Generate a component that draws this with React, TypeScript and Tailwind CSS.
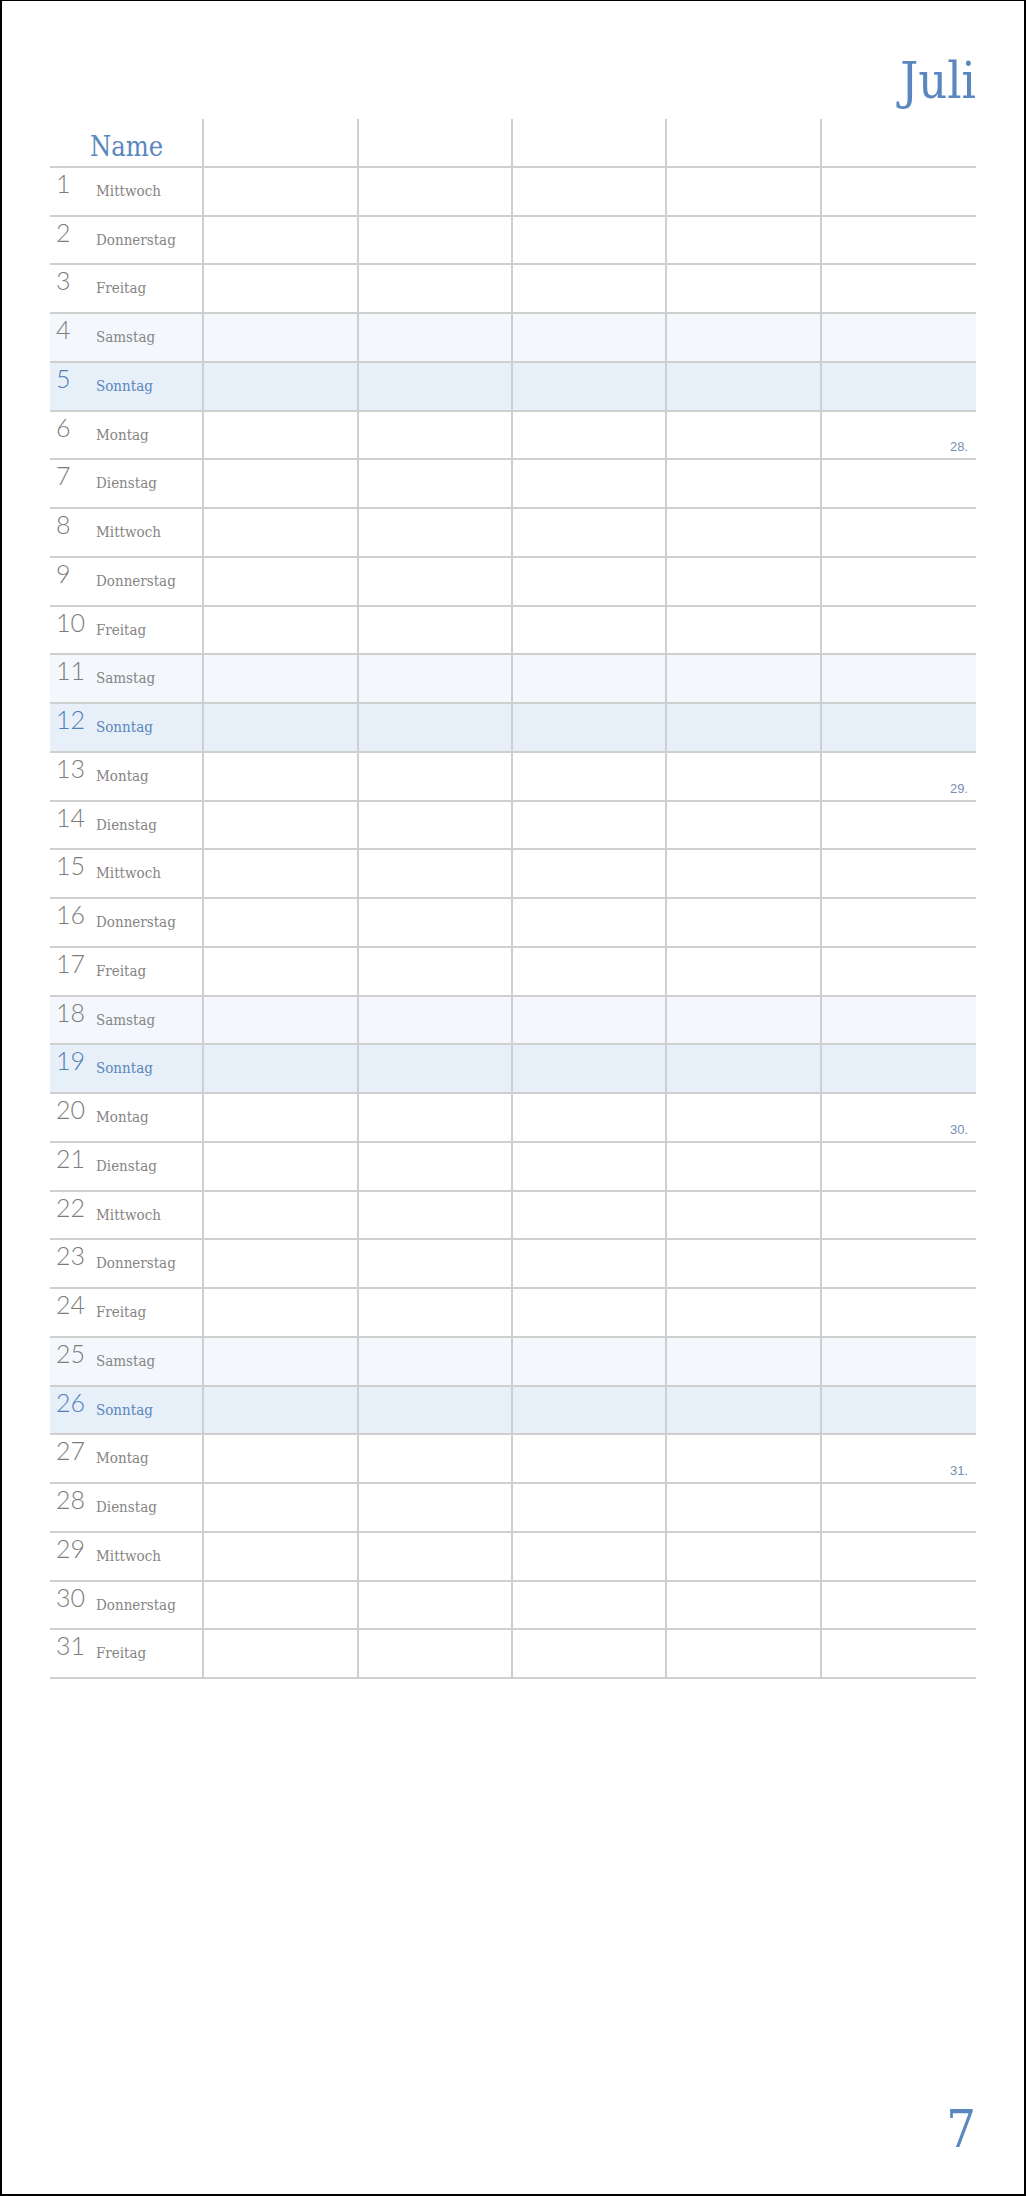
const WEEKDAYS = [
  "Montag",
  "Dienstag",
  "Mittwoch",
  "Donnerstag",
  "Freitag",
  "Samstag",
  "Sonntag",
];

// calendar week shown in the last column of each Monday row
const WEEK_NUMBERS: Record<number, string> = {
  6: "28.",
  13: "29.",
  20: "30.",
  27: "31.",
};

const DAYS = Array.from({ length: 31 }, (_, i) => i + 1);

function DayRow({ day }: { day: number }) {
  // 1. Juli is a Mittwoch
  const name = WEEKDAYS[(day + 1) % 7];
  const sat = name === "Samstag";
  const sun = name === "Sonntag";
  const week = WEEK_NUMBERS[day];

  return (
    <div
      className={`grid h-[48.75px] grid-cols-6 border-b-2 border-[#cfcfcf] ${
        sun ? "bg-[#e7eff9]" : sat ? "bg-[#f4f8fd]" : ""
      }`}
    >
      <div className="flex items-start border-r-2 border-[#cfcfcf]">
        <span
          className={`w-[46px] shrink-0 pl-[6px] pt-[3px] font-['Lato',sans-serif] text-[25px] font-light leading-none ${
            sun ? "text-[#4f7fb8]" : "text-[#7c7c7c]"
          }`}
        >
          {day}
        </span>
        <span
          className={`pt-[16px] font-['DejaVu_Serif_Condensed','DejaVu_Serif',serif] text-[15px] leading-none [font-stretch:condensed] ${
            sun ? "text-[#5a87bd]" : "text-[#858585]"
          }`}
        >
          {name}
        </span>
      </div>
      {[0, 1, 2, 3].map((i) => (
        <div key={i} className="border-r-2 border-[#cfcfcf]" />
      ))}
      <div className="flex items-end justify-end pb-[5px] pr-[8px]">
        {week && (
          <span className="font-['Liberation_Sans',sans-serif] text-[13px] leading-none text-[#7890b0]">
            {week}
          </span>
        )}
      </div>
    </div>
  );
}

export default function App() {
  return (
    <div className="flex h-[2196px] w-[1026px] flex-col border-x-2 border-b-2 border-t border-black bg-white px-[48px]">
      {/* month title */}
      <div className="flex justify-end pt-[55px]">
        <h1 className="font-['DejaVu_Serif_Condensed','DejaVu_Serif',serif] text-[50px] font-normal leading-none text-[#5a87bd] [font-stretch:condensed]">
          Juli
        </h1>
      </div>

      {/* planner grid */}
      <div className="mt-[13px]">
        <div className="grid h-[48.75px] grid-cols-6 border-b-2 border-[#cfcfcf]">
          <div className="border-r-2 border-[#cfcfcf] pl-[40px] pt-[14px]">
            <span className="font-['DejaVu_Serif_Condensed','DejaVu_Serif',serif] text-[27px] leading-none text-[#5a87bd] [font-stretch:condensed]">
              Name
            </span>
          </div>
          {[0, 1, 2, 3].map((i) => (
            <div key={i} className="border-r-2 border-[#cfcfcf]" />
          ))}
          <div />
        </div>
        {DAYS.map((d) => (
          <DayRow key={d} day={d} />
        ))}
      </div>

      {/* page number */}
      <div className="mt-auto flex justify-end pb-[39px]">
        <span className="font-['DejaVu_Serif_Condensed','DejaVu_Serif',serif] text-[52px] leading-none text-[#5a87bd] [font-stretch:condensed]">
          7
        </span>
      </div>
    </div>
  );
}
